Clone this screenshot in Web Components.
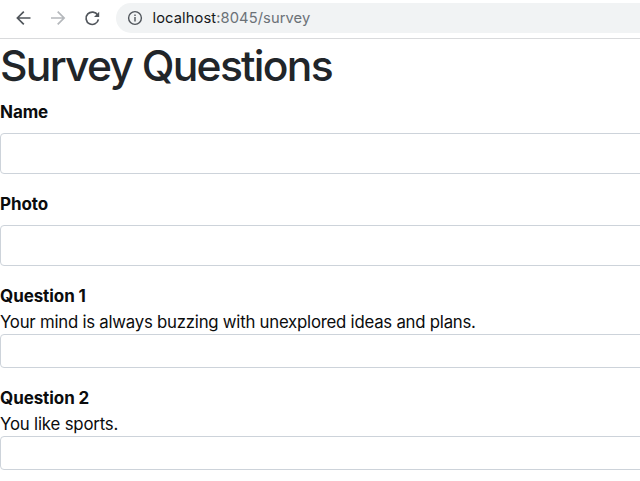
<!DOCTYPE html>
<html lang="en">
<head>
<meta charset="utf-8">
<title>Survey Questions</title>
<style>
html,body{margin:0;background:#fff;height:481px;overflow:hidden}
body{font-family:Inter,"Liberation Sans",sans-serif;color:#0b0c0d}
</style>
</head>
<body>
<browser-bar><span slot="host">localhost</span><span slot="path">:8045/survey</span></browser-bar>
<survey-page>
  <span slot="title">Survey Questions</span>
  <survey-field label="Name"></survey-field>
  <survey-field label="Photo"></survey-field>
  <survey-field label="Question 1" compact>Your mind is always buzzing with unexplored ideas and plans.</survey-field>
  <survey-field label="Question 2" compact style="--q:-.18px">You like sports.</survey-field>
</survey-page>
<script>
customElements.define('browser-bar', class extends HTMLElement {
  constructor() {
    super();
    this.attachShadow({mode: 'open'}).innerHTML = `
<style>
:host{display:flex;box-sizing:border-box;height:39px;padding:3px 0 5px 14px;border-bottom:1px solid #d9dadc;overflow:hidden}
svg{flex:none;fill:none;stroke:#50555b;stroke-width:1.7}
.nav{width:20px;height:20px;margin:5px 14px 0 0}
.nav.off{stroke:#b5b8bc}
.nav.last{margin-right:14px}
.omni{display:flex;align-items:center;flex:1;height:30px;border-radius:15px 0 0 15px;background:#f1f3f4;padding-left:11px;font-size:14.7px;line-height:30px;white-space:pre;color:#6b7177}
.info{width:16px;height:16px;margin-right:9.5px;stroke-width:1.4}
.host{color:#16181b}
.url{letter-spacing:.1px}
</style>
<svg class="nav" viewBox="0 0 20 20"><path d="M16.5 10H3.6M9.8 3.6 3.4 10l6.4 6.4"/></svg>
<svg class="nav off" viewBox="0 0 20 20"><path d="M3 10h12.9M9.7 3.6l6.4 6.4-6.4 6.4"/></svg>
<svg class="nav last" viewBox="0 0 20 20"><path d="M15.7 7.2A6.2 6.2 0 1 0 16.4 11.4"/><path d="M17.2 3.7v5.2H12z" fill="#50555b" stroke="none"/></svg>
<div class="omni"><svg class="info" viewBox="0 0 16 16"><circle cx="8" cy="8" r="6.4"/><path d="M8 7.1v4.3M8 4.5v1.6"/></svg><span class="url"><span class="host"><slot name="host"></slot></span><slot name="path"></slot></span></div>`;
  }
});
customElements.define('survey-page', class extends HTMLElement {
  constructor() {
    super();
    this.attachShadow({mode: 'open'}).innerHTML = `
<style>
:host{display:block}
h1{margin:0;height:60px;font-size:42.6px;line-height:53px;font-weight:500;letter-spacing:-1.75px;color:#212529;white-space:nowrap}
</style>
<h1><slot name="title"></slot></h1><slot></slot>`;
  }
});
customElements.define('survey-field', class extends HTMLElement {
  constructor() {
    super();
    this.attachShadow({mode: 'open'}).innerHTML = `
<style>
:host{display:block;margin-bottom:17px;font-size:16.8px;line-height:26px;white-space:nowrap}
label{display:block;font-weight:650;font-size:17px;height:34px;letter-spacing:-.08px}
:host([compact]) label{height:26px}
.q{display:none;height:25px;letter-spacing:var(--q,-.24px)}
:host([compact]) .q{display:block}
.box{box-sizing:border-box;width:660px;height:41px;border:1px solid #cdd3da;border-radius:4px;background:#fff}
:host([compact]) .box{height:34px}
</style>
<label></label><div class="q"><slot></slot></div><div class="box"></div>`;
    this.shadowRoot.querySelector('label').textContent = this.getAttribute('label');
  }
});
</script>
</body>
</html>
